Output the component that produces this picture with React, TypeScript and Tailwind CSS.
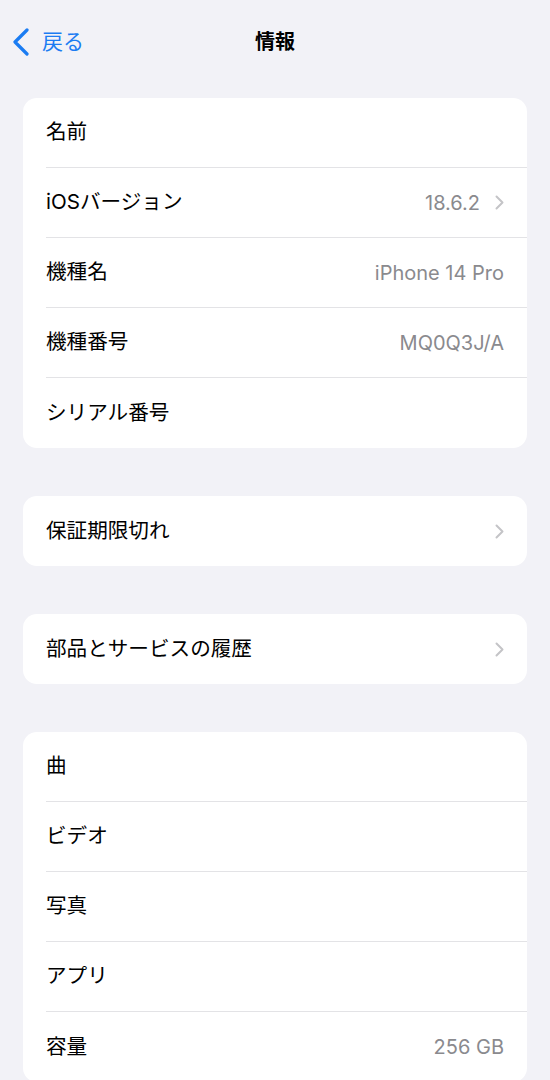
import { ReactNode } from "react";

// 設定 > 一般 > 情報 の画面
type Row = {
  label: string;
  value?: string;
  chevron?: boolean;
};

const groups: Row[][] = [
  [
    { label: "名前" },
    { label: "iOSバージョン", value: "18.6.2", chevron: true },
    { label: "機種名", value: "iPhone 14 Pro" },
    { label: "機種番号", value: "MQ0Q3J/A" },
    { label: "シリアル番号" },
  ],
  [{ label: "保証期限切れ", chevron: true }],
  [{ label: "部品とサービスの履歴", chevron: true }],
  [
    { label: "曲" },
    { label: "ビデオ" },
    { label: "写真" },
    { label: "アプリ" },
    { label: "容量", value: "256 GB" },
  ],
];

const font = {
  fontFamily: '"Inter", "Noto Sans CJK JP", sans-serif',
};

function Chevron() {
  return (
    <svg width="9" height="15" viewBox="0 0 9 15" className="shrink-0">
      <path
        d="M1.5 1.5 L7.5 7.5 L1.5 13.5"
        fill="none"
        stroke="#c4c4c7"
        strokeWidth="2"
        strokeLinecap="round"
        strokeLinejoin="round"
      />
    </svg>
  );
}

function Card({ children }: { children: ReactNode }) {
  return <div className="overflow-hidden rounded-[14px] bg-white">{children}</div>;
}

function SettingRow({ row, last }: { row: Row; last: boolean }) {
  return (
    <div className="pl-[23px]">
      <div
        className={`flex h-[70px] items-center justify-between pr-[23px] ${
          last ? "" : "border-b border-[#e3e3e6]"
        }`}
      >
        <span className="text-[20.6px] text-black">{row.label}</span>
        <div className="flex items-center gap-[15px]">
          {row.value && <span className="text-[20px] text-[#8a8a8e]">{row.value}</span>}
          {row.chevron && <Chevron />}
        </div>
      </div>
    </div>
  );
}

export default function App() {
  return (
    <div className="min-h-screen w-[550px] bg-[#f2f2f7]" style={font}>
      {/* ナビゲーションバー */}
      <div className="relative flex h-[84px] items-center justify-center">
        <div className="absolute left-[12px] top-0 flex h-full items-center gap-[12px] text-[#1b7cf2]">
          <svg width="18" height="28" viewBox="0 0 18 28">
            <path
              d="M15 2 L3 14 L15 26"
              fill="none"
              stroke="#1b7cf2"
              strokeWidth="3.2"
              strokeLinecap="round"
              strokeLinejoin="round"
            />
          </svg>
          <span className="text-[21px]">戻る</span>
        </div>
        <h1 className="text-[20px] font-semibold text-black">情報</h1>
      </div>

      <div className="flex flex-col gap-[48px] px-[23px] pt-[14px]">
        {groups.map((rows, gi) => (
          <Card key={gi}>
            {rows.map((row, i) => (
              <SettingRow key={row.label} row={row} last={i === rows.length - 1} />
            ))}
          </Card>
        ))}
      </div>
    </div>
  );
}
